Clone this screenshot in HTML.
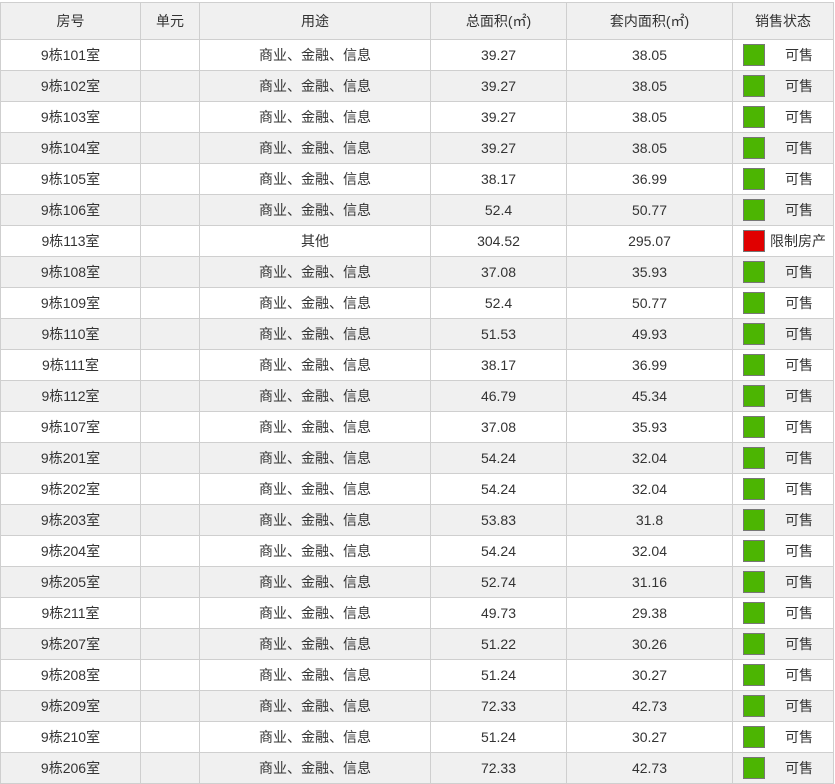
<!DOCTYPE html>
<html><head><meta charset="utf-8"><style>
body{margin:0;background:#fff;font-family:"Liberation Sans","Noto Sans CJK SC",sans-serif;font-size:14px;color:#333;width:835px;height:784px;overflow:hidden}
table{position:absolute;left:0;top:2px;border-collapse:collapse;table-layout:fixed;width:833px}
td,th{border:1px solid #cfcfcf;text-align:center;padding:0;height:30px;line-height:30px;font-weight:normal;white-space:nowrap;overflow:hidden}
th{height:36px;line-height:36px;background:#f0f0f0}
tr:nth-child(odd) td{background:#f0f0f0}
.b{display:inline-block;width:20px;height:20px;border:1px solid #777;background:#4cb502;vertical-align:middle;margin-top:-3px}
.r{background:#e00000}
.s{text-align:left;padding-left:10px}
.s span.t{display:inline-block;vertical-align:middle;margin-left:20px;line-height:20px;margin-top:-3px}
.s span.t2{display:inline-block;vertical-align:middle;margin-left:5px;line-height:20px;margin-top:-3px}
</style></head><body>
<table>
<colgroup><col style="width:140px"><col style="width:59px"><col style="width:231px"><col style="width:136px"><col style="width:166px"><col style="width:101px"></colgroup>
<tr><th>房号</th><th>单元</th><th>用途</th><th>总面积(㎡)</th><th>套内面积(㎡)</th><th>销售状态</th></tr>
<tr><td>9栋101室</td><td></td><td>商业、金融、信息</td><td>39.27</td><td>38.05</td><td class="s"><span class="b"></span><span class="t">可售</span></td></tr>
<tr><td>9栋102室</td><td></td><td>商业、金融、信息</td><td>39.27</td><td>38.05</td><td class="s"><span class="b"></span><span class="t">可售</span></td></tr>
<tr><td>9栋103室</td><td></td><td>商业、金融、信息</td><td>39.27</td><td>38.05</td><td class="s"><span class="b"></span><span class="t">可售</span></td></tr>
<tr><td>9栋104室</td><td></td><td>商业、金融、信息</td><td>39.27</td><td>38.05</td><td class="s"><span class="b"></span><span class="t">可售</span></td></tr>
<tr><td>9栋105室</td><td></td><td>商业、金融、信息</td><td>38.17</td><td>36.99</td><td class="s"><span class="b"></span><span class="t">可售</span></td></tr>
<tr><td>9栋106室</td><td></td><td>商业、金融、信息</td><td>52.4</td><td>50.77</td><td class="s"><span class="b"></span><span class="t">可售</span></td></tr>
<tr><td>9栋113室</td><td></td><td>其他</td><td>304.52</td><td>295.07</td><td class="s"><span class="b r"></span><span class="t2">限制房产</span></td></tr>
<tr><td>9栋108室</td><td></td><td>商业、金融、信息</td><td>37.08</td><td>35.93</td><td class="s"><span class="b"></span><span class="t">可售</span></td></tr>
<tr><td>9栋109室</td><td></td><td>商业、金融、信息</td><td>52.4</td><td>50.77</td><td class="s"><span class="b"></span><span class="t">可售</span></td></tr>
<tr><td>9栋110室</td><td></td><td>商业、金融、信息</td><td>51.53</td><td>49.93</td><td class="s"><span class="b"></span><span class="t">可售</span></td></tr>
<tr><td>9栋111室</td><td></td><td>商业、金融、信息</td><td>38.17</td><td>36.99</td><td class="s"><span class="b"></span><span class="t">可售</span></td></tr>
<tr><td>9栋112室</td><td></td><td>商业、金融、信息</td><td>46.79</td><td>45.34</td><td class="s"><span class="b"></span><span class="t">可售</span></td></tr>
<tr><td>9栋107室</td><td></td><td>商业、金融、信息</td><td>37.08</td><td>35.93</td><td class="s"><span class="b"></span><span class="t">可售</span></td></tr>
<tr><td>9栋201室</td><td></td><td>商业、金融、信息</td><td>54.24</td><td>32.04</td><td class="s"><span class="b"></span><span class="t">可售</span></td></tr>
<tr><td>9栋202室</td><td></td><td>商业、金融、信息</td><td>54.24</td><td>32.04</td><td class="s"><span class="b"></span><span class="t">可售</span></td></tr>
<tr><td>9栋203室</td><td></td><td>商业、金融、信息</td><td>53.83</td><td>31.8</td><td class="s"><span class="b"></span><span class="t">可售</span></td></tr>
<tr><td>9栋204室</td><td></td><td>商业、金融、信息</td><td>54.24</td><td>32.04</td><td class="s"><span class="b"></span><span class="t">可售</span></td></tr>
<tr><td>9栋205室</td><td></td><td>商业、金融、信息</td><td>52.74</td><td>31.16</td><td class="s"><span class="b"></span><span class="t">可售</span></td></tr>
<tr><td>9栋211室</td><td></td><td>商业、金融、信息</td><td>49.73</td><td>29.38</td><td class="s"><span class="b"></span><span class="t">可售</span></td></tr>
<tr><td>9栋207室</td><td></td><td>商业、金融、信息</td><td>51.22</td><td>30.26</td><td class="s"><span class="b"></span><span class="t">可售</span></td></tr>
<tr><td>9栋208室</td><td></td><td>商业、金融、信息</td><td>51.24</td><td>30.27</td><td class="s"><span class="b"></span><span class="t">可售</span></td></tr>
<tr><td>9栋209室</td><td></td><td>商业、金融、信息</td><td>72.33</td><td>42.73</td><td class="s"><span class="b"></span><span class="t">可售</span></td></tr>
<tr><td>9栋210室</td><td></td><td>商业、金融、信息</td><td>51.24</td><td>30.27</td><td class="s"><span class="b"></span><span class="t">可售</span></td></tr>
<tr><td>9栋206室</td><td></td><td>商业、金融、信息</td><td>72.33</td><td>42.73</td><td class="s"><span class="b"></span><span class="t">可售</span></td></tr>
</table>
</body></html>
